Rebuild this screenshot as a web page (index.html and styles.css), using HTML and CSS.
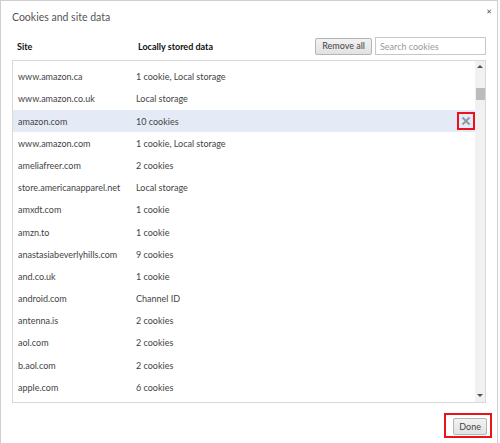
FILE: index.html
```html
<!DOCTYPE html>
<html>
<head>
<meta charset="utf-8">
<link rel="stylesheet" href="styles.css">
</head>
<body>
<div class="dialog">
  <div class="titlebar">
    <span class="title">Cookies and site data</span>
    <span class="close">&#x2715;</span>
  </div>
  <div class="header">
    <span class="h-site">Site</span>
    <span class="h-data">Locally stored data</span>
    <span class="spacer"></span>
    <button class="btn">Remove all</button>
    <input class="search" type="text" placeholder="Search cookies">
  </div>
  <div class="list">
    <div class="rows">
      <div class="row"><span class="site">www.amazon.ca</span><span class="data">1 cookie, Local storage</span></div>
      <div class="row"><span class="site">www.amazon.co.uk</span><span class="data">Local storage</span></div>
      <div class="row selected"><span class="site">amazon.com</span><span class="data">10 cookies</span><span class="del-box"><svg width="10" height="10" viewBox="0 0 10 10"><path d="M1.5 1.5 L8.5 8.5 M8.5 1.5 L1.5 8.5" stroke="#9096a0" stroke-width="1.8"/></svg></span></div>
      <div class="row"><span class="site">www.amazon.com</span><span class="data">1 cookie, Local storage</span></div>
      <div class="row"><span class="site">ameliafreer.com</span><span class="data">2 cookies</span></div>
      <div class="row"><span class="site">store.americanapparel.net</span><span class="data">Local storage</span></div>
      <div class="row"><span class="site">amxdt.com</span><span class="data">1 cookie</span></div>
      <div class="row"><span class="site">amzn.to</span><span class="data">1 cookie</span></div>
      <div class="row"><span class="site">anastasiabeverlyhills.com</span><span class="data">9 cookies</span></div>
      <div class="row"><span class="site">and.co.uk</span><span class="data">1 cookie</span></div>
      <div class="row"><span class="site">android.com</span><span class="data">Channel ID</span></div>
      <div class="row"><span class="site">antenna.is</span><span class="data">2 cookies</span></div>
      <div class="row"><span class="site">aol.com</span><span class="data">2 cookies</span></div>
      <div class="row"><span class="site">b.aol.com</span><span class="data">2 cookies</span></div>
      <div class="row"><span class="site">apple.com</span><span class="data">6 cookies</span></div>
    </div>
    <div class="scrollbar">
      <span class="arrow-up"></span>
      <span class="thumb"></span>
      <span class="track-fill"></span>
      <span class="arrow-down"></span>
    </div>
  </div>
  <div class="footer">
    <span class="mark"><button class="btn done">Done</button></span>
  </div>
</div>
</body>
</html>
```
FILE: styles.css
```css
html, body {
  margin: 0;
  padding: 0;
  background: #ffffff;
}
body {
  font-family: Lato, "Open Sans", "Noto Sans", sans-serif;
  color: #333333;
  overflow: hidden;
}
.dialog {
  box-sizing: border-box;
  width: 498px;
  height: 443px;
  border: 1px solid #cfcfcf;
  border-bottom: none;
  padding: 0 11px;
  display: flex;
  flex-direction: column;
}
.titlebar {
  display: flex;
  align-items: flex-start;
  justify-content: space-between;
  height: 35px;
  margin-right: -6px;
}
.title {
  font-size: 10.5px;
  color: #555555;
  margin-top: 10px;
}
.close {
  font-size: 7px;
  color: #555;
  font-weight: bold;
  margin-top: 7px;
  font-family: "DejaVu Sans", sans-serif;
}
.header {
  display: flex;
  align-items: center;
  height: 18px;
  margin-top: 1px;
}
.h-site, .h-data {
  font-size: 9px;
  font-weight: bold;
  color: #111;
}
.h-site {
  padding-left: 5px;
  width: 121px;
}
.spacer {
  flex: 1;
}
.btn {
  font-family: Lato, "Open Sans", sans-serif;
  font-size: 9px;
  color: #444;
  height: 17px;
  padding: 0 6px;
  border: 1px solid #b5b5b5;
  border-radius: 2px;
  background: linear-gradient(#f2f2f2, #e2e2e2);
  line-height: 14px;
}
.search {
  box-sizing: border-box;
  width: 111px;
  height: 18px;
  margin-left: 3px;
  border: 1px solid #c8c8c8;
  font-family: Lato, "Open Sans", sans-serif;
  font-size: 9px;
  padding: 0 4px;
  color: #333;
  outline: none;
}
.search::placeholder {
  color: #9a9a9a;
}
.list {
  box-sizing: border-box;
  margin-top: 5px;
  width: 474px;
  height: 343px;
  border: 1px solid #d9d9d9;
  display: flex;
}
.rows {
  flex: 1;
  padding-top: 4.6px;
}
.row {
  display: flex;
  align-items: center;
  height: 22.2px;
  font-size: 9px;
  color: #444;
  padding-left: 5px;
}
.row.selected {
  background: #e4ebf6;
}
.site {
  width: 118px;
  white-space: nowrap;
}
.data {
  flex: 1;
  white-space: nowrap;
}
.del-box {
  box-sizing: border-box;
  width: 18px;
  height: 18px;
  border: 2px solid #e8141c;
  display: flex;
  align-items: center;
  justify-content: center;
}
.scrollbar {
  width: 10px;
  background: #f1f1f1;
  display: flex;
  flex-direction: column;
  align-items: center;
}
.arrow-up, .arrow-down {
  width: 0;
  height: 0;
  border-left: 3px solid transparent;
  border-right: 3px solid transparent;
}
.arrow-up {
  margin-top: 4px;
  border-bottom: 3px solid #505050;
}
.arrow-down {
  margin-bottom: 5px;
  border-top: 3px solid #505050;
}
.thumb {
  width: 9px;
  height: 12px;
  margin-top: 20px;
  background: #bcbcbc;
}
.track-fill {
  flex: 1;
}
.footer {
  display: flex;
  justify-content: flex-end;
  margin-top: 10px;
  margin-right: -6px;
}
.mark {
  border: 2px solid #e8141c;
  padding: 3px 3px 1px 7px;
  display: flex;
}
.done {
  height: 17px;
  padding: 0 5px;
}
```
